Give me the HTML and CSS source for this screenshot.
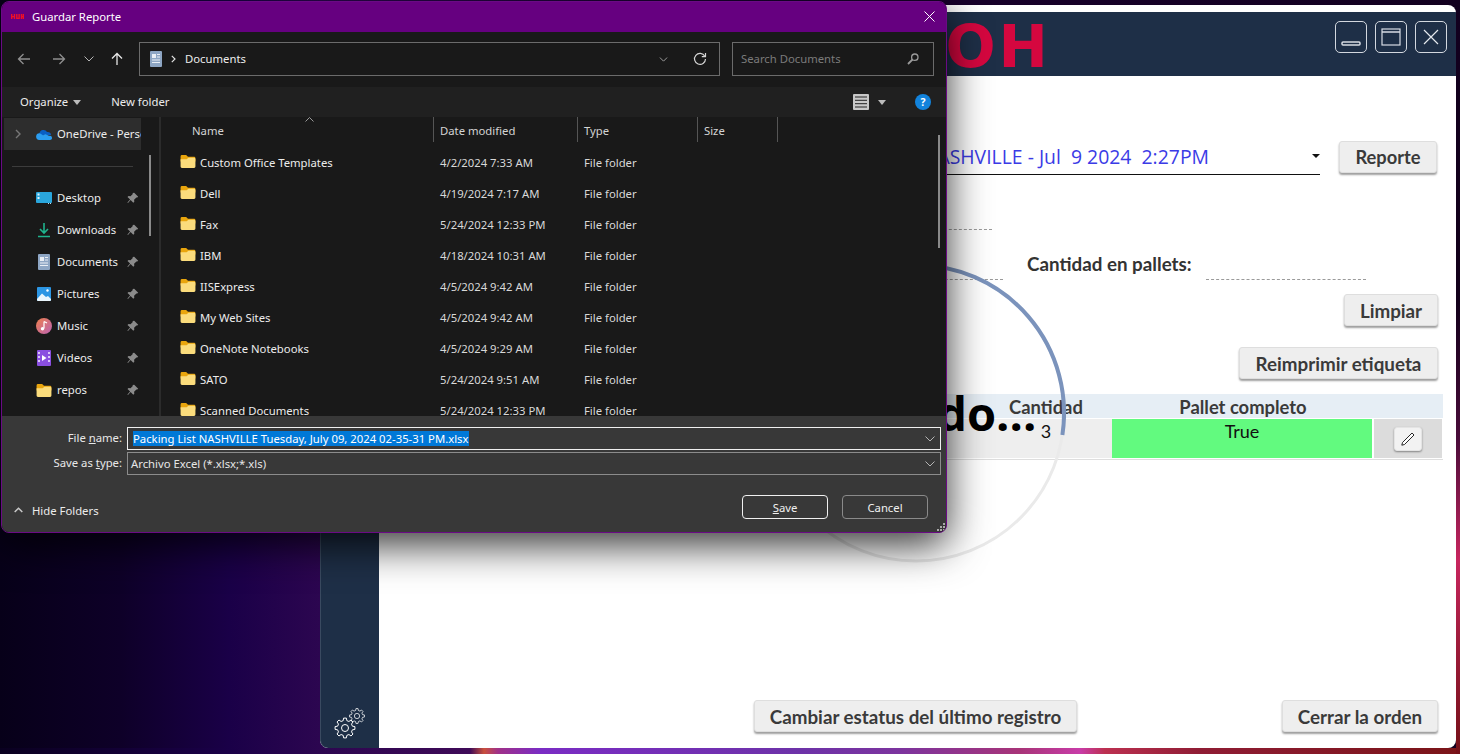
FILE: index.html
```html
<!DOCTYPE html>
<html lang="es">
<head>
<meta charset="utf-8">
<title>Guardar Reporte</title>
<link rel="stylesheet" href="styles.css">
</head>
<body>
<svg class="sprite" xmlns="http://www.w3.org/2000/svg">
  <symbol id="folder" viewBox="0 0 16 14">
    <path fill="#e9a50d" d="M0 1.5Q0 0 1.5 0H6l2 2H14.5Q16 2 16 3.5V7H0z"/>
    <path fill="#fbdc7c" d="M0 4.5H6.5l2-1.5H14.5Q16 3 16 4.5v8Q16 14 14.5 14H1.5Q0 14 0 12.5z"/>
  </symbol>
  <symbol id="pin" viewBox="0 0 12 12">
    <path fill="#8b8b8b" d="M7.2.8l4 4-1 .8-.8-.2-2.3 2.3.2 2-1 1L3.6 8 1 11l-.6-.5 2.7-2.9L.5 5l1-1 2 .2 2.3-2.3-.2-.8z"/>
  </symbol>
  <symbol id="doc" viewBox="0 0 12 16">
    <rect width="12" height="16" rx="1" fill="#8ea6c4"/>
    <path fill="#e9eef5" d="M2 3h4v4H2zM7 3h3v1H7zM7 5.500h3v1H7zM2 8.500h8v1H2zM2 11h8v1H2z"/>
  </symbol>
  <symbol id="gear" viewBox="-11 -11 22 22">
    <path fill="none" stroke="#fff" stroke-width="1" d="M9.900-1.390 9.900 1.390 7.370 1.840 6.510 3.910 7.990 6.020 6.020 7.990 3.910 6.510 1.840 7.370 1.390 9.900-1.390 9.900-1.840 7.370-3.910 6.510-6.020 7.990-7.990 6.020-6.510 3.910-7.370 1.840-9.900 1.390-9.900-1.390-7.370-1.840-6.510-3.910-7.990-6.020-6.020-7.990-3.910-6.510-1.840-7.370-1.390-9.900 1.390-9.900 1.840-7.370 3.910-6.510 6.020-7.990 7.990-6.020 6.510-3.910 7.370-1.840Z"/>
    <circle r="3.500" fill="none" stroke="#fff" stroke-width="1"/>
  </symbol>
  <symbol id="chev" viewBox="0 0 10 6">
    <path fill="none" stroke="#b5b5b5" stroke-width="1" d="M.5.500 5 5 9.500.500"/>
  </symbol>
</svg>

<div class="desktop">

  <section class="app">
    <header class="app-head">
      <div class="logo">OH</div>
      <div class="win-btns">
        <button class="win-btn"><svg width="20" height="24" viewBox="0 0 20 24"><rect x="1" y="17" width="18" height="3" rx="1" fill="none" stroke="#d8dde4" stroke-width="1.500"/></svg></button>
        <button class="win-btn"><svg width="20" height="20" viewBox="0 0 20 20"><rect x="1" y="2" width="18" height="16" fill="none" stroke="#d8dde4" stroke-width="1.200"/><path d="M1 5h18" stroke="#d8dde4" stroke-width="1.500"/></svg></button>
        <button class="win-btn"><svg width="16" height="16" viewBox="0 0 16 16"><path d="M1 1l14 14M15 1L1 15" stroke="#e4e8ee" stroke-width="1.200"/></svg></button>
      </div>
    </header>
    <div class="app-body">
      <aside class="side">
        <svg class="gears" width="36" height="36" viewBox="0 0 36 36">
          <use href="#gear" x="2" y="11" width="22" height="22"/>
          <use href="#gear" x="16.750" y="1.750" width="16.500" height="16.500"/>
        </svg>
      </aside>
      <main class="content">
        <div class="row row-report">
          <div class="combo"><span class="combo-text">Packing List NASHVILLE - Jul  9 2024  2:27PM</span><span class="combo-arrow"></span></div>
          <button class="btn btn-report">Reporte</button>
        </div>
        <div class="row row-dash1"><span class="dash dash-a"></span></div>
        <div class="row row-dash2">
          <span class="dash dash-b"></span>
          <span class="lbl">Cantidad en pallets:</span>
          <span class="dash dash-c"></span>
        </div>
        <div class="row row-limpiar"><button class="btn btn-limpiar">Limpiar</button></div>
        <div class="row row-reprint"><button class="btn btn-reprint">Reimprimir etiqueta</button></div>
        <div class="table">
          <div class="th"></div>
          <div class="th">Cantidad</div>
          <div class="th">Pallet completo</div>
          <div class="th th-end"></div>
          <div class="td td-first"></div>
          <div class="td td-num">3</div>
          <div class="td td-true">True</div>
          <div class="td td-edit">
            <button class="pencil"><svg width="14" height="14" viewBox="0 0 14 14"><path d="M.8 13.200l.7-2.700L11 1l2 2-9.500 9.500z" fill="#fff" stroke="#111" stroke-width=".9"/></svg></button>
          </div>
        </div>
        <div class="row row-bottom">
          <button class="btn btn-status">Cambiar estatus del último registro</button>
          <button class="btn btn-close">Cerrar la orden</button>
        </div>
        <div class="loader">
          <svg class="ring" width="300" height="300" viewBox="0 0 300 300">
            <circle cx="150" cy="150" r="148" fill="none" stroke="#eaeaea" stroke-width="3"/>
            <path d="M150 2A148 148 0 0 1 296.400 172" fill="none" stroke="#7b93bc" stroke-width="4"/>
          </svg>
          <span class="loader-text">Cargando...</span>
        </div>
      </main>
    </div>
  </section>

  <section class="dialog">
    <div class="d-title">
      <svg class="d-logo" width="13" height="5" viewBox="0 0 14 6" preserveAspectRatio="none"><path fill="#f01025" d="M0 0h1.500v6H0zM3 0h1.500v6H3zM1 2.500h2v1.500H1zM5.500 0H7v6H5.500zM8 0h1.500v6H8zM6 4.500h2V6H6zM10.500 0H12v6h-1.500zM12.500 0H14v6h-1.500zM11.500 2.500h1.500V4h-1.500z"/></svg>
      <span class="d-title-text">Guardar Reporte</span>
      <svg class="d-close" width="11" height="11" viewBox="0 0 11 11"><path d="M.5.500l10 10M10.500.500l-10 10" stroke="#fff" stroke-width="1"/></svg>
    </div>

    <div class="d-tool">
      <span class="nav-b nav-back"><svg width="14" height="12" viewBox="0 0 14 12"><path d="M13 6H1.500M6.500 1l-5 5 5 5" fill="none" stroke="#8f8f8f" stroke-width="1.300"/></svg></span>
      <span class="nav-b nav-fwd"><svg width="14" height="12" viewBox="0 0 14 12"><path d="M1 6h11.500M7.500 1l5 5-5 5" fill="none" stroke="#8f8f8f" stroke-width="1.300"/></svg></span>
      <span class="nav-b nav-down"><svg width="10" height="6"><use href="#chev"/></svg></span>
      <span class="nav-b nav-up"><svg width="12" height="14" viewBox="0 0 12 14"><path d="M6 13V1.500M1 6.500l5-5 5 5" fill="none" stroke="#e8e8e8" stroke-width="1.300"/></svg></span>
      <div class="addr">
        <svg class="addr-doc" width="12" height="16"><use href="#doc"/></svg>
        <svg class="addr-sep" width="5" height="8" viewBox="0 0 5 8"><path d="M.8.800 4 4 .8 7.200" fill="none" stroke="#e0e0e0" stroke-width="1.200"/></svg>
        <span class="addr-text">Documents</span>
        <svg class="addr-chev" width="9" height="5" viewBox="0 0 10 6"><use href="#chev"/></svg>
        <svg class="addr-refresh" width="14" height="14" viewBox="0 0 14 14"><path d="M11.800 4.200A5.500 5.500 0 1 0 12.500 7" fill="none" stroke="#d5d5d5" stroke-width="1.200"/><path d="M12.500 1v3.700H8.800" fill="none" stroke="#d5d5d5" stroke-width="1.200"/></svg>
      </div>
      <div class="search">
        <span class="search-text">Search Documents</span>
        <svg width="12" height="12" viewBox="0 0 12 12"><circle cx="7.800" cy="4.200" r="3.200" fill="none" stroke="#9a9a9a" stroke-width="1.300"/><path d="M5.500 6.500L1 11" stroke="#9a9a9a" stroke-width="1.800"/></svg>
      </div>
    </div>

    <div class="d-cmd">
      <span class="cmd">Organize</span><span class="tri tri-org"></span>
      <span class="cmd cmd-new">New folder</span>
      <svg class="view-ic" width="16" height="16" viewBox="0 0 16 16"><rect width="16" height="16" rx="1" fill="#c8c8c8"/><path d="M2 3h12M2 6.300h12M2 9.700h12M2 13h12" stroke="#222" stroke-width="1"/></svg>
      <span class="tri tri-view"></span>
      <span class="help">?</span>
    </div>

    <div class="d-main">
      <nav class="pane">
        <div class="pane-list">
          <div class="pane-od">
            <svg class="od-chev" width="6" height="10" viewBox="0 0 6 10"><path d="M1 1l4 4-4 4" fill="none" stroke="#777" stroke-width="1.400"/></svg>
            <svg width="16" height="11" viewBox="0 0 16 11"><path fill="#0a5fc4" d="M3.500 5a4 4 0 0 1 7.500-2 3.200 3.200 0 0 1 4 3H3.500z"/><path fill="#2b9df0" d="M3.800 4.200A3.300 3.300 0 0 0 3.300 11H14a2 2 0 0 0 2-2.200 2.200 2.200 0 0 0-3-2l-3.500-1.500-2.500 1z"/></svg>
            <span class="pane-od-label">OneDrive - Personal</span>
          </div>
          <div class="pane-rule"></div>
          <div class="pane-item"><svg width="16" height="12" viewBox="0 0 16 12"><rect width="16" height="11" rx="1" fill="#2aa6dc"/><path fill="#dff4fc" d="M1.500 1.500h2v2h-2zM1.500 5h2v2h-2z"/><path fill="#bde" d="M12 11h1v1h-1zM14 11h1v1h-1z"/></svg><span class="pane-label">Desktop</span><svg class="pin"><use href="#pin"/></svg></div>
          <div class="pane-item"><svg width="16" height="16" viewBox="0 0 16 16"><path d="M8 1v9.500M4 7l4 4 4-4" fill="none" stroke="#1fb38d" stroke-width="1.600"/><path d="M2 14.500h12" stroke="#1fb38d" stroke-width="1.600"/></svg><span class="pane-label">Downloads</span><svg class="pin"><use href="#pin"/></svg></div>
          <div class="pane-item"><svg width="16" height="16" viewBox="-2 0 16 16"><use href="#doc" width="12" height="16"/></svg><span class="pane-label">Documents</span><svg class="pin"><use href="#pin"/></svg></div>
          <div class="pane-item"><svg width="16" height="14" viewBox="0 0 14 14"><rect width="14" height="14" rx="1" fill="#2c96e4"/><path fill="#eaf6fd" d="M0 12l5-5.500L9 10l2-1 3 3v1a1 1 0 0 1-1 1H1a1 1 0 0 1-1-1z"/><circle cx="10.500" cy="3.500" r="1.200" fill="#fff"/></svg><span class="pane-label">Pictures</span><svg class="pin"><use href="#pin"/></svg></div>
          <div class="pane-item"><svg width="16" height="16" viewBox="0 0 16 16"><defs><linearGradient id="mus" x1="0" y1="0" x2="1" y2="1"><stop offset="0" stop-color="#ee7f4c"/><stop offset="1" stop-color="#bb63b4"/></linearGradient></defs><circle cx="8" cy="8" r="8" fill="url(#mus)"/><path d="M8 3.500v7M8 3.500l3 1.500" stroke="#fff" stroke-width="1.200" fill="none"/><circle cx="6.500" cy="10.700" r="1.700" fill="#fff"/></svg><span class="pane-label">Music</span><svg class="pin"><use href="#pin"/></svg></div>
          <div class="pane-item"><svg width="16" height="16" viewBox="0 0 14 16"><rect width="14" height="16" rx="1" fill="#8a4fe0"/><path fill="#d9c5f7" d="M1 2h2v2H1zM1 6h2v2H1zM1 10h2v2H1zM11 2h2v2h-2zM11 6h2v2h-2zM11 10h2v2h-2z"/><path fill="#fff" d="M5 5l4.500 3L5 11z"/></svg><span class="pane-label">Videos</span><svg class="pin"><use href="#pin"/></svg></div>
          <div class="pane-item"><svg width="16" height="13"><use href="#folder"/></svg><span class="pane-label">repos</span><svg class="pin"><use href="#pin"/></svg></div>
          <div class="pane-item"><svg width="16" height="13"><use href="#folder"/></svg><span class="pane-label">Temp</span></div>
        </div>
        <div class="pane-track"><span class="pane-thumb"></span></div>
      </nav>
      <div class="split"></div>
      <div class="files">
        <div class="f-head">
          <span class="f-h f-h-name">Name<svg class="sort" width="9" height="5" viewBox="0 0 9 5"><path d="M.5 4.500l4-4 4 4" fill="none" stroke="#9a9a9a"/></svg></span>
          <span class="f-h f-h-date">Date modified</span>
          <span class="f-h f-h-type">Type</span>
          <span class="f-h f-h-size">Size</span>
        </div>
        <div class="f-row"><span class="f-name"><svg width="16" height="13"><use href="#folder"/></svg>Custom Office Templates</span><span class="f-date">4/2/2024 7:33 AM</span><span class="f-type">File folder</span></div>
        <div class="f-row"><span class="f-name"><svg width="16" height="13"><use href="#folder"/></svg>Dell</span><span class="f-date">4/19/2024 7:17 AM</span><span class="f-type">File folder</span></div>
        <div class="f-row"><span class="f-name"><svg width="16" height="13"><use href="#folder"/></svg>Fax</span><span class="f-date">5/24/2024 12:33 PM</span><span class="f-type">File folder</span></div>
        <div class="f-row"><span class="f-name"><svg width="16" height="13"><use href="#folder"/></svg>IBM</span><span class="f-date">4/18/2024 10:31 AM</span><span class="f-type">File folder</span></div>
        <div class="f-row"><span class="f-name"><svg width="16" height="13"><use href="#folder"/></svg>IISExpress</span><span class="f-date">4/5/2024 9:42 AM</span><span class="f-type">File folder</span></div>
        <div class="f-row"><span class="f-name"><svg width="16" height="13"><use href="#folder"/></svg>My Web Sites</span><span class="f-date">4/5/2024 9:42 AM</span><span class="f-type">File folder</span></div>
        <div class="f-row"><span class="f-name"><svg width="16" height="13"><use href="#folder"/></svg>OneNote Notebooks</span><span class="f-date">4/5/2024 9:29 AM</span><span class="f-type">File folder</span></div>
        <div class="f-row"><span class="f-name"><svg width="16" height="13"><use href="#folder"/></svg>SATO</span><span class="f-date">5/24/2024 9:51 AM</span><span class="f-type">File folder</span></div>
        <div class="f-row"><span class="f-name"><svg width="16" height="13"><use href="#folder"/></svg>Scanned Documents</span><span class="f-date">5/24/2024 12:33 PM</span><span class="f-type">File folder</span></div>
        <span class="f-thumb"></span>
      </div>
    </div>

    <div class="d-foot">
      <div class="form">
        <label class="f-lbl">File <u>n</u>ame:</label>
        <div class="inp inp-on"><span class="sel">Packing List NASHVILLE Tuesday, July 09, 2024 02-35-31 PM.xlsx</span><svg width="10" height="6"><use href="#chev"/></svg></div>
        <label class="f-lbl">Save as <u>t</u>ype:</label>
        <div class="inp"><span class="inp-text">Archivo Excel (*.xlsx;*.xls)</span><svg width="10" height="6"><use href="#chev"/></svg></div>
      </div>
      <div class="foot-row">
        <span class="hide"><svg width="9" height="6" viewBox="0 0 9 6"><path d="M.7 5l3.800-3.800L8.300 5" fill="none" stroke="#c8c8c8" stroke-width="1.500"/></svg>Hide Folders</span>
        <button class="d-btn d-btn-main"><u>S</u>ave</button>
        <button class="d-btn">Cancel</button>
      </div>
      <svg class="grip" width="10" height="10" viewBox="0 0 10 10"><path fill="#aaa" d="M7 1h2v2H7zM4 4h2v2H4zM7 4h2v2H7zM1 7h2v2H1zM4 7h2v2H4zM7 7h2v2H7z"/></svg>
    </div>
  </section>
</div>
</body>
</html>
```

FILE: styles.css
```css
* { box-sizing: border-box; }
html, body { margin: 0; padding: 0; height: 100%; overflow: hidden; }
button { font: inherit; margin: 0; padding: 0; }
.sprite { display: none; }

.desktop {
  position: relative;
  width: 1460px;
  height: 754px;
  overflow: hidden;
  background:
    linear-gradient(180deg, #12001f 0, #12001a 300px, #4a0c3a 440px, #c8255e 560px, #a01c3c 640px, #741018 754px) right top / 4px 100% no-repeat,
    linear-gradient(90deg, #0a0020 0, #1a0048 230px, #2c0650 320px, #3f0a58 470px, #c9503c 484px, #a03088 498px, #7a2cc4 540px, #6d32a8 800px, #7c349e 900px, #a83478 1020px, #c83ca8 1080px, #bc3050 1105px, #8f1c34 1200px, #7a1418 1460px) left bottom / 100% 6px no-repeat,
    linear-gradient(90deg, #070019 0, #0e0028 120px, #1a0048 230px, #2c0650 320px, #1a0030 700px, #12001f 1460px);
}

/* ---------- application window ---------- */
.app {
  position: absolute;
  left: 320px;
  top: 5px;
  width: 1136px;
  height: 743px;
  display: flex;
  flex-direction: column;
  background: #fff;
  border-radius: 8px;
  overflow: hidden;
  font-family: "Lato", "Liberation Sans", sans-serif;
  color: #333;
}
.app-head {
  margin-top: 7px;
  height: 64px;
  flex: none;
  display: flex;
  justify-content: space-between;
  padding-right: 9px;
  background: #1e2f47;
  overflow: hidden;
}
.logo {
  width: 731px;
  text-align: right;
  font-family: "DejaVu Sans", sans-serif;
  font-weight: 700;
  font-size: 59px;
  letter-spacing: 3px;
  line-height: 70px;
  color: #d5073f;
  white-space: nowrap;
}
.win-btns { display: flex; gap: 8px; padding-top: 9px; }
.win-btn {
  width: 32px;
  height: 32px;
  background: transparent;
  border: 1.5px solid #d3d8df;
  border-radius: 5px;
  display: flex;
  align-items: center;
  justify-content: center;
}
.app-body { flex: 1; display: flex; min-height: 0; }
.side {
  width: 59px;
  flex: none;
  background: #1e2f47;
  box-shadow: inset 1px 0 0 #3a4a60;
  border-bottom-left-radius: 8px;
  display: flex;
  flex-direction: column;
  justify-content: flex-end;
  align-items: center;
  padding: 0 0 6px 1px;
}
.content {
  position: relative;
  flex: 1;
  display: flex;
  flex-direction: column;
  padding: 65px 18px 16px 0;
}
.row { display: flex; justify-content: flex-end; align-items: flex-end; }
.btn {
  height: 32px;
  padding: 0 16px;
  background: #eeeeee;
  border: 1px solid #dedede;
  border-radius: 3px;
  box-shadow: 0 2px 2px rgba(0, 0, 0, .38);
  color: #3a3a3a;
  font-family: "Lato", "Liberation Sans", sans-serif;
  font-weight: 700;
  font-size: 18.8px;
  white-space: nowrap;
}
.btn-report { width: 98px; padding: 0; font-size: 18.3px; }
.row-report { height: 34px; gap: 19px; padding-right: 1px; align-items: flex-start; }
.combo {
  width: 760px;
  height: 34px;
  display: flex;
  justify-content: flex-end;
  align-items: center;
  border-bottom: 1px solid #111;
}
.combo-text { white-space: pre; color: #3b3be6; font-family: "Open Sans", sans-serif; font-size: 19.4px; padding-bottom: 2px; }
.combo-arrow {
  width: 0;
  height: 0;
  margin: 0 0 3px 103px;
  border-left: 4px solid transparent;
  border-right: 4px solid transparent;
  border-top: 4px solid #111;
}
.dash { display: block; border-bottom: 1px dashed #9a9a9a; }
.row-dash1 { justify-content: flex-start; height: 55px; margin-left: 0; }
.dash-a { width: 400px; margin-left: 213px; }
.row-dash2 { justify-content: flex-start; height: 50px; }
.dash-b { width: 400px; margin-left: 224px; }
.lbl { margin-left: 24px; font-weight: 700; font-size: 18.8px; line-height: 24px; padding-bottom: 4px; white-space: nowrap; }
.dash-c { width: 160px; margin-left: 14px; }
.row-limpiar { margin-top: 14px; }
.btn-limpiar { width: 94px; padding: 0; }
.row-reprint { margin-top: 21px; }
.btn-reprint { width: 199px; padding: 0; }

.table {
  margin-top: 15px;
  margin-right: -5px;
  display: grid;
  grid-template-columns: 1fr 130px 260px 69px;
  grid-template-rows: 24px 39px;
  column-gap: 2px;
  row-gap: 1px;
  padding-bottom: 1px;
  border-bottom: 1px solid #dedede;
}
.th {
  background: #e6eef5;
  margin-right: -2px;
  font-weight: 700;
  font-size: 18.4px;
  line-height: 26px;
  text-align: center;
  color: #3a3a3a;
  white-space: nowrap;
}
.th-end { margin-right: 0; }
.td { background: #eeeeee; text-align: center; font-size: 18px; line-height: 24px; color: #111; }
.td-first { margin-right: -2px; }
.td-num { margin-right: -2px; }
.td-true { background: #62fa7f; }
.td-edit { background: #dcdcdc; margin-right: 1px; display: flex; align-items: center; justify-content: center; }
.pencil {
  width: 28px;
  height: 24px;
  background: #f2f2f2;
  border: 1px solid #e4e4e4;
  border-radius: 3px;
  box-shadow: 0 1px 2px rgba(0, 0, 0, .4);
  display: flex;
  align-items: center;
  justify-content: center;
}
.row-bottom { margin-top: auto; gap: 205px; }
.btn-status { width: 323px; padding: 0; }
.btn-close { width: 156px; padding: 0; }

.loader {
  position: absolute;
  left: 387px;
  top: 187px;
  width: 300px;
  height: 300px;
  display: flex;
  align-items: center;
  justify-content: center;
}
.ring { position: absolute; left: 0; top: 0; }
.loader-text {
  font-family: "Open Sans", sans-serif;
  font-weight: 700;
  font-size: 47px;
  color: #000;
  white-space: nowrap;
  margin: 0 0 0 -24px;
}

/* ---------- save dialog ---------- */
.dialog {
  position: absolute;
  left: 1px;
  top: 1px;
  width: 946px;
  height: 532px;
  display: flex;
  flex-direction: column;
  border: 1px solid #6a0a84;
  border-radius: 8px;
  overflow: hidden;
  background: #191919;
  box-shadow: 0 12px 40px rgba(0, 0, 0, .8);
  font-family: "Noto Sans", "Open Sans", sans-serif;
  font-size: 11.3px;
  color: #ececec;
}
.d-title {
  height: 30px;
  flex: none;
  background: #660080;
  display: flex;
  align-items: center;
  padding-left: 9px;
  color: #fff;
}
.d-logo { flex: none; margin-bottom: 2px; }
.d-title-text { margin-left: 8px; padding-bottom: 2px; }
.d-close { margin-left: auto; margin-right: 11px; margin-bottom: 2px; }

.d-tool { height: 55px; flex: none; display: flex; align-items: center; padding: 0 0 1px 4px; }
.nav-b { display: flex; align-items: center; justify-content: center; flex: none; }
.nav-back, .nav-fwd { width: 35px; }
.nav-down { width: 25px; }
.nav-up { width: 32px; }
.addr {
  width: 581px;
  height: 34px;
  margin-left: 6px;
  display: flex;
  align-items: center;
  border: 1px solid #6b6b6b;
  padding-left: 10px;
}
.addr-sep { margin-left: 9px; }
.addr-text { margin-left: 9px; padding-bottom: 2px; }
.addr-chev { margin-left: auto; }
.addr-refresh { margin: 0 12px 0 25px; }
.search {
  width: 202px;
  height: 34px;
  margin-left: 12px;
  display: flex;
  align-items: center;
  justify-content: space-between;
  border: 1px solid #6b6b6b;
  padding: 0 14px 0 8px;
  color: #7b7b7b;
}
.search-text { padding-bottom: 2px; }

.d-cmd { height: 30px; flex: none; background: #202020; display: flex; align-items: center; padding-left: 18px; }
.cmd { color: #ececec; padding-bottom: 2px; }
.tri { width: 0; height: 0; border-left: 4.5px solid transparent; border-right: 4.5px solid transparent; border-top: 5px solid #bcbcbc; }
.tri-org { margin-left: 5px; }
.cmd-new { margin-left: 30px; }
.view-ic { margin-left: auto; }
.tri-view { margin-left: 9px; }
.help {
  width: 16px;
  height: 16px;
  margin: 0 15px 0 29px;
  border-radius: 50%;
  background: #1283dc;
  color: #fff;
  font-weight: 700;
  font-size: 10.5px;
  line-height: 16px;
  text-align: center;
}

.d-main { height: 299px; flex: none; display: flex; overflow: hidden; }
.pane { width: 157px; flex: none; display: flex; padding-left: 2px; }
.pane-list { width: 137px; flex: none; overflow: hidden; }
.pane-od { height: 32px; margin-top: 1px; background: #2d2d2d; display: flex; align-items: center; padding-left: 11px; }
.od-chev { margin-right: 15px; flex: none; }
.od-chev + svg { flex: none; }
.pane-od-label, .pane-label { margin-left: 5px; padding-bottom: 2px; white-space: nowrap; }
.pane-rule { height: 1px; margin: 16px 8px 0 8px; background: #3c3c3c; }
.pane-item { height: 32px; display: flex; align-items: center; padding-left: 32px; }
.pane-rule + .pane-item { margin-top: 15px; }
.pane-item > svg:first-child { flex: none; }
.pin { width: 12px; height: 12px; margin-left: auto; margin-right: 2px; flex: none; }
.pane-track { position: relative; flex: 1; }
.pane-thumb { position: absolute; left: 8px; top: 38px; width: 2px; height: 81px; background: #8a8a8a; }
.split { width: 2px; flex: none; background: #2b2b2b; }
.files { position: relative; flex: 1; overflow: hidden; padding-left: 19px; }
.f-head { height: 26px; margin-bottom: 4px; display: flex; margin-left: 1px; }
.f-h { position: relative; height: 25px; display: flex; align-items: center; color: #d4d4d4; padding: 1px 0 0 6px; border-right: 1px solid #555; white-space: nowrap; }
.f-h-name { width: 253px; padding-left: 11px; }
.f-h-date { width: 144px; }
.f-h-type { width: 120px; }
.f-h-size { width: 80px; }
.sort { position: absolute; left: 124px; top: 0; }
.f-row { height: 31px; display: flex; align-items: center; white-space: nowrap; }
.f-name { width: 260px; display: flex; align-items: center; gap: 4px; padding-bottom: 1px; }
.f-name svg { flex: none; margin-bottom: 2px; }
.f-date { width: 144px; color: #d8d8d8; padding-bottom: 1px; }
.f-type { color: #d8d8d8; padding-bottom: 1px; }
.f-thumb { position: absolute; right: 6px; top: 18px; width: 2px; height: 113px; background: #8a8a8a; }

.d-foot { position: relative; flex: 1; background: #383838; padding-top: 11px; }
.form { display: grid; grid-template-columns: 120px 814px; grid-template-rows: 23px 23px; column-gap: 5px; row-gap: 2px; }
.f-lbl { text-align: right; line-height: 22px; color: #e8e8e8; }
.inp {
  display: flex;
  align-items: center;
  justify-content: space-between;
  border: 1px solid #8c8c8c;
  padding: 0 5px 0 3px;
  color: #e6e6e6;
}
.inp-on { border: 1px solid #f0f0f0; padding-left: 5px; }
.sel { background: #0078d7; color: #fff; line-height: 15px; padding-right: 1px; }
.foot-row { display: flex; align-items: center; margin-top: 20px; padding-right: 18px; height: 24px; }
.hide { display: flex; align-items: center; gap: 9px; padding: 6px 0 0 12px; margin-right: auto; }
.d-btn {
  width: 86px;
  height: 24px;
  background: transparent;
  border: 1px solid #8a8a8a;
  border-radius: 4px;
  color: #f0f0f0;
  margin-left: 14px;
  font-family: "Noto Sans", "Open Sans", sans-serif;
  font-size: 11.3px;
}
.d-btn-main { border-color: #f0f0f0; }
.grip { position: absolute; right: 0; bottom: 0; }
```
